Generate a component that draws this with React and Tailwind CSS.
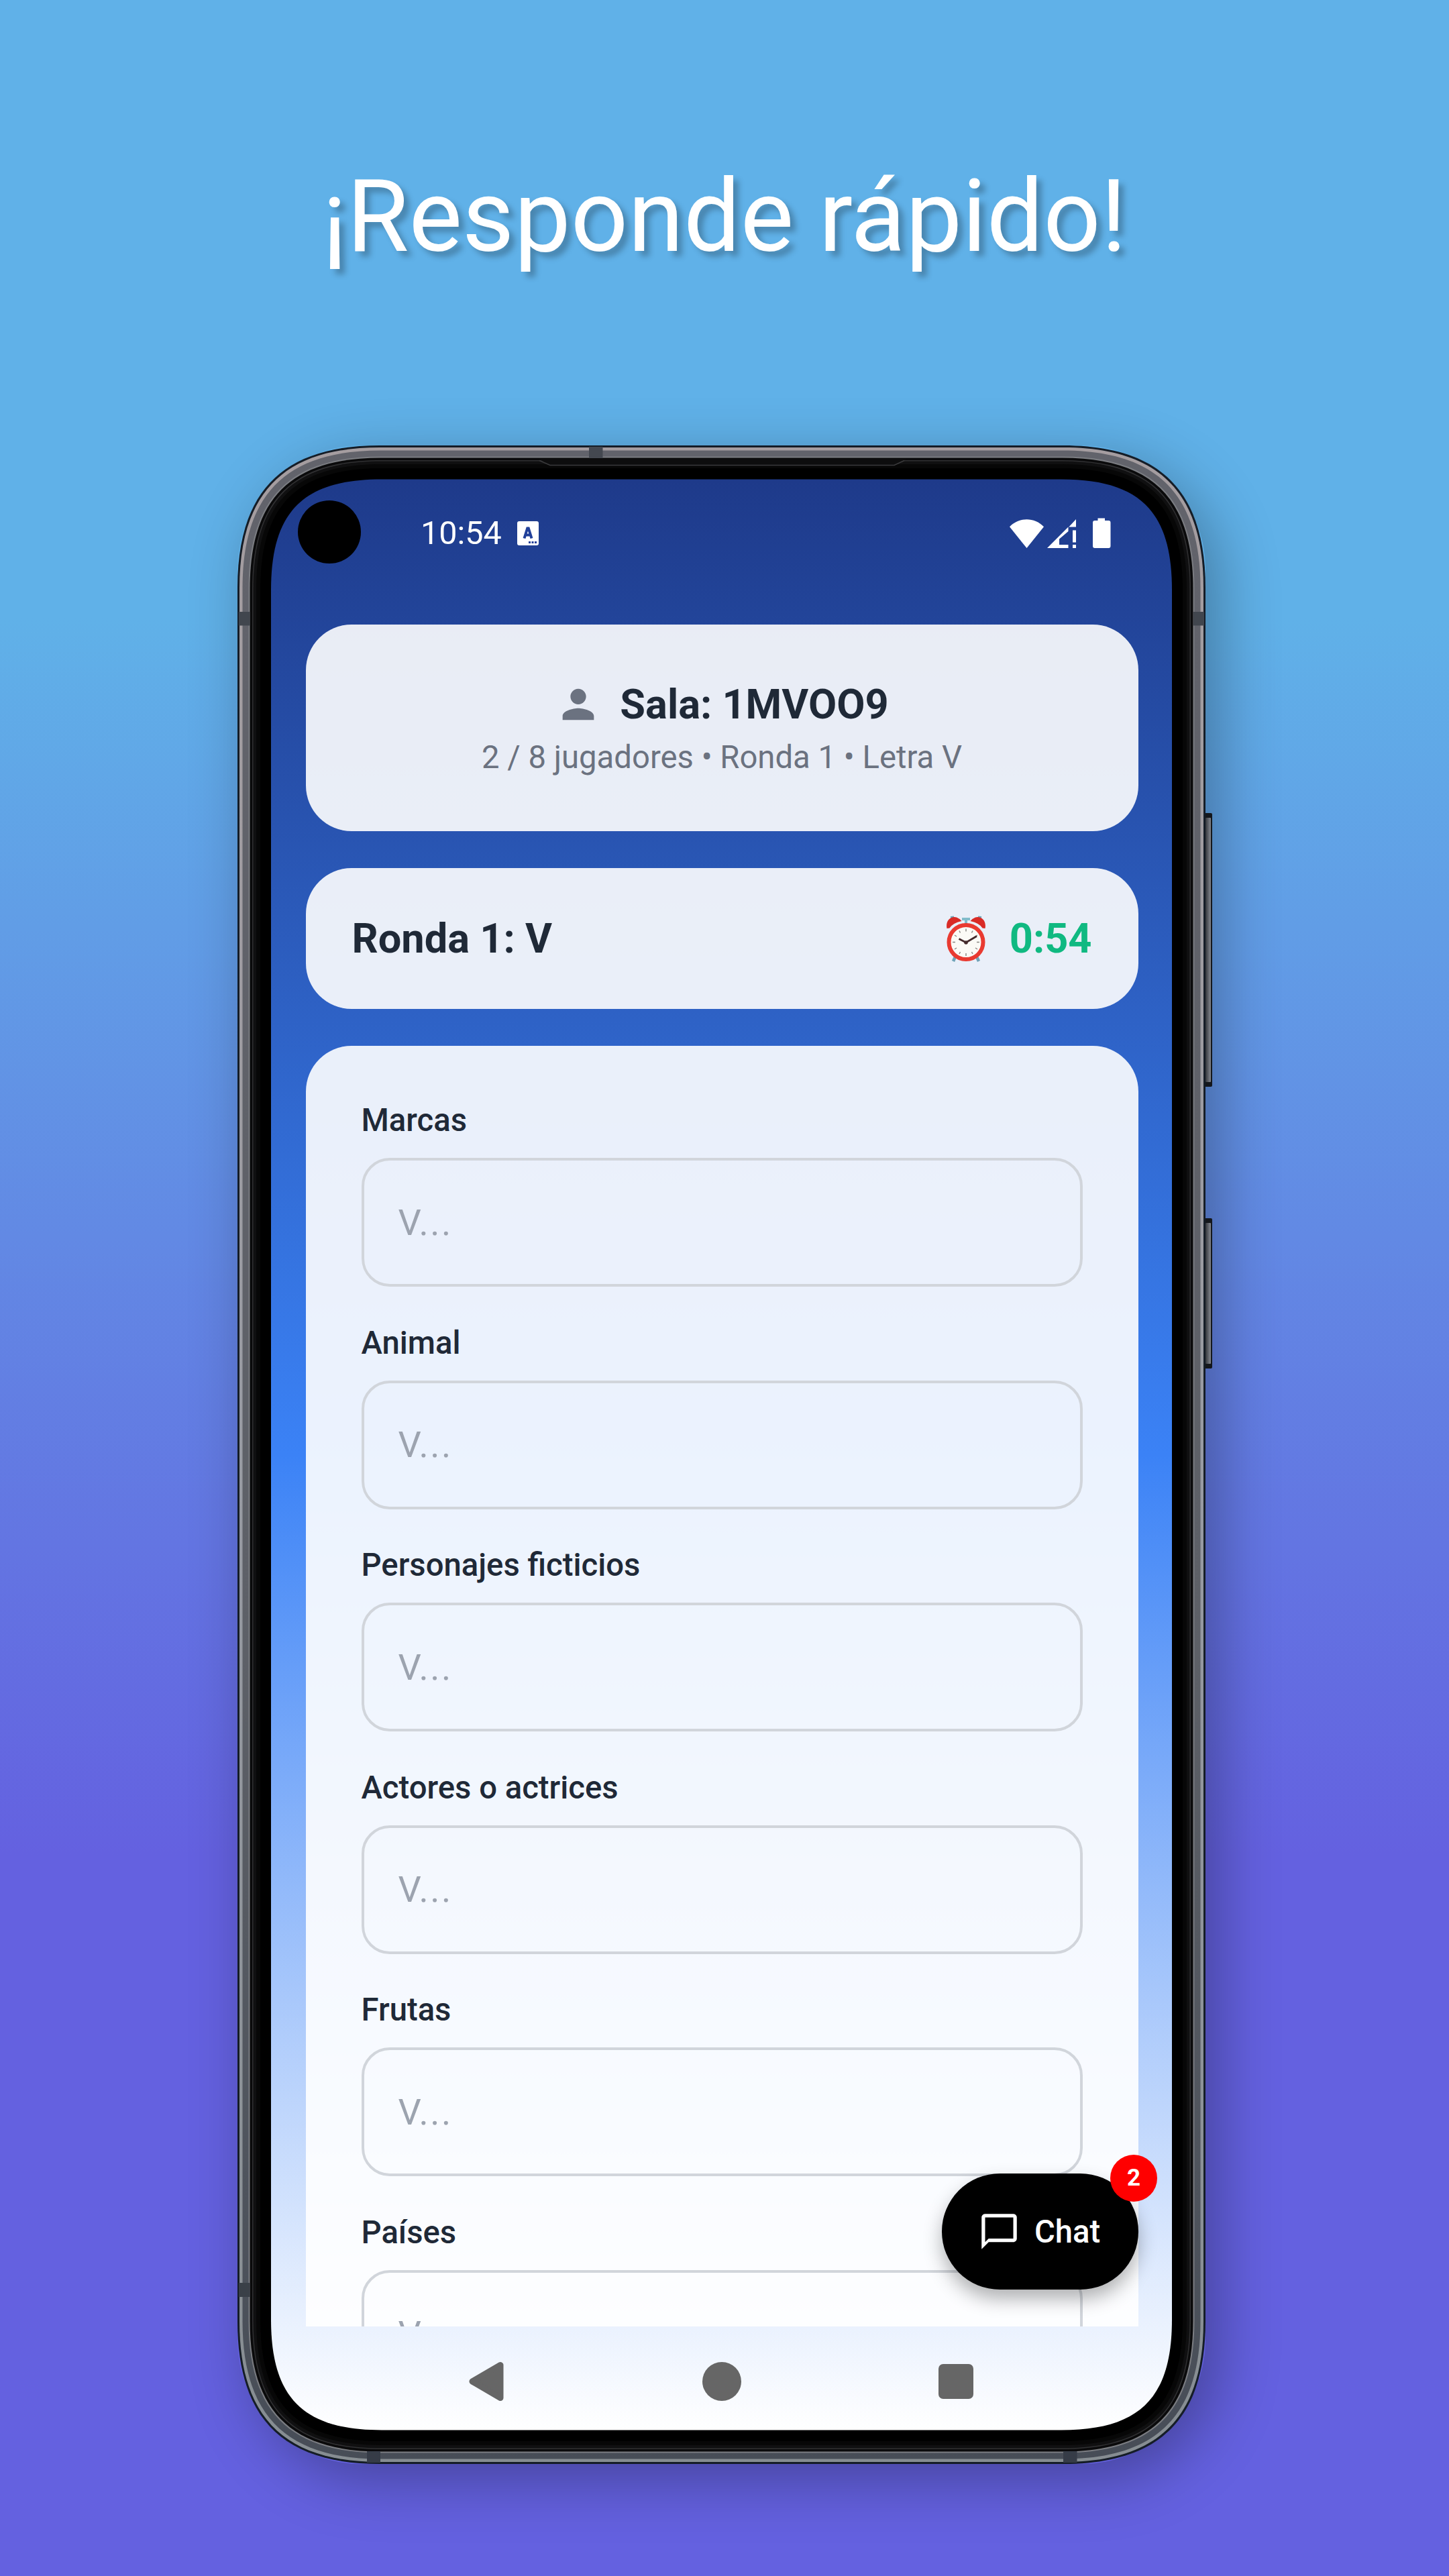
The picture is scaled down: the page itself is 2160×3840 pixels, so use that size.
import React from "react";

const FIELDS = ["Marcas", "Animal", "Personajes ficticios", "Actores o actrices", "Frutas", "Países"];

// Rounded rectangle whose corners span `e` along each edge, with control points at `c`.
function squircle(x, y, w, h, e, c) {
  const r = x + w;
  const b = y + h;
  return `M${x + e} ${y}H${r - e}C${r - c} ${y} ${r} ${y + c} ${r} ${y + e}V${b - e}C${r} ${b - c} ${r - c} ${b} ${r - e} ${b}H${x + e}C${x + c} ${b} ${x} ${b - c} ${x} ${b - e}V${y + e}C${x} ${y + c} ${x + c} ${y} ${x + e} ${y}Z`;
}

function ring(inset) {
  return squircle(inset, inset, 1443 - 2 * inset, 3009 - 2 * inset, 212 - inset * 0.9, 68 - inset * 0.4);
}

const SCREEN = squircle(50, 50.5, 1343, 2908, 165, 48);

function PhoneFrame() {
  return (
    <svg className="pointer-events-none absolute left-0 top-0 h-[3009px] w-[1454px]" viewBox="0 0 1454 3009" fill="none">
      <defs>
        <linearGradient id="metal" x1="0" y1="0" x2="0" y2="1">
          <stop offset="0" stopColor="#62636b" />
          <stop offset="0.6" stopColor="#5d6067" />
          <stop offset="1" stopColor="#474d57" />
        </linearGradient>
        <linearGradient id="shine" x1="0" y1="0" x2="0" y2="1">
          <stop offset="0" stopColor="#a59da0" />
          <stop offset="0.5" stopColor="#989ba3" />
          <stop offset="1" stopColor="#868d92" />
        </linearGradient>
        <linearGradient id="key" x1="0" y1="0" x2="1" y2="0">
          <stop offset="0" stopColor="#33363b" />
          <stop offset="0.5" stopColor="#5d6067" />
          <stop offset="1" stopColor="#85888e" />
        </linearGradient>
        <mask id="hole">
          <rect width="1454" height="3009" fill="#fff" />
          <path d={SCREEN} fill="#000" />
        </mask>
      </defs>
      {[[548, 408], [1152, 224]].map(([y, h]) => (
        <g key={y}>
          <rect x="1440" y={y} width="13" height={h} rx="2" fill="#14171c" />
          <rect x="1443" y={y + 7} width="8" height={h - 14} rx="1" fill="url(#key)" />
        </g>
      ))}
      <g mask="url(#hole)">
        <path d={ring(0)} fill="#151d27" />
        <path d={ring(3)} fill="url(#shine)" />
        <path d={ring(7.5)} fill="url(#metal)" />
        <path d={ring(16.5)} fill="#7b7d82" />
        <path d={ring(18.5)} fill="#0a0a0b" />
        <path d={ring(22)} fill="#303032" />
        <path d={ring(23.5)} fill="#101011" />
        <path d={ring(28)} fill="#070707" />
        <path d={ring(34)} fill="#000" />
        <path d="M448 20H998L980 29H467L452 22Z" fill="#0d0d0e" />
        <path d="M450 22.5L466 29.5H979L994 22.5" stroke="#3a3a3c" strokeWidth="1.6" />
        <rect x="524" y="2" width="20.5" height="17" fill="#444850" />
        <rect x="2" y="248" width="16.5" height="20.5" fill="#41464e" />
        <rect x="1425" y="248" width="16" height="20.5" fill="#41464e" />
        <rect x="2" y="2739" width="16.5" height="21" fill="#3a4048" />
        <rect x="193" y="2990" width="20" height="17" fill="#363c47" />
        <rect x="1231" y="2990" width="20.5" height="17" fill="#363c47" />
      </g>
    </svg>
  );
}

function KeyboardIcon() {
  return (
    <svg className="ml-[23px] h-9 w-8" viewBox="0 0 32 36">
      <rect width="32" height="36" rx="3" fill="#fff" />
      <path d="M10.5 25.500L15.200 10.500H16.800L21.500 25.500M12.500 20.500H19.500" stroke="#21409a" strokeWidth="4" fill="none" />
      <path d="M17 30h3v3h-3zM21.500 30h3v3h-3zM26 30h3v3h-3z" fill="#21409a" />
    </svg>
  );
}

function StatusIcons() {
  return (
    <svg className="h-[46px] w-[152px]" viewBox="0 0 152 46" fill="#fff">
      <path d="M25.500 45L0 13.200C14-1.500 37-1.500 51 13.200Z" />
      <path d="M99 2V13.500H88.300ZM87.500 13.500V20L74 31.500V40H87.500V45H56Z" />
      <path d="M94 18.500h5v18h-5zM94 40h5v5h-5z" />
      <path d="M131.500 0.500H142V4H147.500Q150.500 4 150.500 7V42Q150.500 45 147.500 45H127Q124 45 124 42V7Q124 4 127 4H131.500Z" />
    </svg>
  );
}

function AlarmClock() {
  return (
    <svg className="h-[70px] w-[60px]" viewBox="0 0 60 70" fill="none">
      <path d="M14 61L11 68M46 61L49 68" stroke="#6fa3b8" strokeWidth="4.500" />
      <path d="M24 5H36M30 5V12" stroke="#82bccb" strokeWidth="4" />
      <path d="M7 2.500L12 2M48 2L53 2.500" stroke="#6fa3b8" strokeWidth="3" />
      <path d="M1.500 19C-1 7 8 0 16 2.500Q21 4.500 23.500 8Q10 11 5.500 18.500Z" fill="#d92b26" />
      <path d="M58.500 19C61 7 52 0 44 2.500Q39 4.500 36.500 8Q50 11 54.500 18.500Z" fill="#d92b26" />
      <circle cx="30" cy="39.500" r="25.500" fill="#fbfaf6" stroke="#e93a31" strokeWidth="6" />
      <path d="M30 19.500v4M30 56v4M10 39.500h4M46 39.500h4M20 22.500l1.500 3M40 22.500l-1.500 3M13 29l3 2M47 29l-3 2M13 50l3-2M47 50l-3-2M20 57l1.500-3M40 57l-1.500-3" stroke="#8d8a87" strokeWidth="1.500" />
      <path d="M19.500 34.500L30 40L46 30.500" stroke="#43292b" strokeWidth="2.800" />
      <circle cx="30" cy="40" r="2.800" fill="#43292b" />
    </svg>
  );
}

function Field({ label }) {
  return (
    <div className="shrink-0">
      <div className="h-[60px] text-[47.250px] font-medium leading-[60px] text-[#1f2937]">{label}</div>
      <div className="mt-[26px] flex h-[192px] items-center rounded-[42px] border-[4px] border-[#d1d5db] pl-[51px] text-[54px] tracking-[2.500px] text-[#9ca3af]">
        V...
      </div>
    </div>
  );
}

export default function App() {
  return (
    <div className="relative h-[3840px] w-[2160px] overflow-hidden bg-[linear-gradient(180deg,#60b1e8_0%,#60b1e8_24%,#6461e0_72%,#6461e0_100%)] font-['Roboto',sans-serif]">
      <h1 className="h-[664px] pt-[233px] text-center text-[150px] font-normal leading-[180px] text-white [text-shadow:8px_8px_8px_rgba(0,0,0,0.25)]">
        ¡Responde rápido!
      </h1>
      <div className="relative ml-[354px] h-[3009px] w-[1443px] rounded-[185px] px-[50px] pt-[50px] shadow-[20px_24px_90px_rgba(0,0,0,0.300)]">
        <div className="flex h-[2909px] w-[1343px] flex-col overflow-hidden rounded-[110px] bg-[linear-gradient(180deg,#1e3a8a_0%,#3b82f6_50%,#ffffff_100%)]">
          <div className="flex h-[217px] shrink-0 items-start pl-[40px] pr-[90px] pt-8">
            <div className="size-[94px] rounded-full bg-black" />
            <div className="ml-[89px] flex h-[98px] items-center text-[48.500px] text-white">
              10:54
              <KeyboardIcon />
            </div>
            <div className="ml-auto flex h-[97px] items-center">
              <StatusIcons />
            </div>
          </div>
          <div className="flex h-[2537px] shrink-0 flex-col overflow-hidden pl-[51.500px] pr-[50.500px]">
            <div className="h-[308px] shrink-0 rounded-[68px] bg-white/90 pt-[79px]">
              <div className="flex h-[80px] items-center justify-center">
                <svg className="size-[70px] fill-[#6b7280]" viewBox="0 0 24 24">
                  <path d="M12 12c2.210 0 4-1.790 4-4s-1.790-4-4-4-4 1.790-4 4 1.790 4 4 4zm0 2c-2.670 0-8 1.340-8 4v2h16v-2c0-2.660-5.330-4-8-4z" />
                </svg>
                <span className="ml-[27px] text-[61.300px] font-bold leading-[80px] text-[#1f2937]">Sala: 1MVOO9</span>
              </div>
              <div className="mt-[7px] text-center text-[47.250px] leading-[64px] text-[#6b7280]">2 / 8 jugadores • Ronda 1 • Letra V</div>
            </div>
            <div className="mt-[55px] flex h-[210px] shrink-0 items-center justify-between rounded-[68px] bg-white/90 pl-[69px] pr-[69px] pt-[2px] text-[61.300px] font-bold text-[#1f2937]">
              <span>Ronda 1: V</span>
              <span className="flex items-center text-[#10b981]">
                <AlarmClock />
                <span className="ml-[35px]">0:54</span>
              </span>
            </div>
            <div className="mt-[55px] flex h-[2300px] shrink-0 flex-col gap-[53.600px] rounded-t-[68px] bg-white/90 pl-[83px] pr-[83px] pt-[81px]">
              {FIELDS.map((label) => (
                <Field key={label} label={label} />
              ))}
            </div>
          </div>
          <div className="flex h-[155px] shrink-0 items-center justify-between pl-[295px] pr-[296px] pt-[8px]">
            <svg className="h-[60px] w-[54px]" viewBox="0 0 54 60">
              <path d="M5 30L47 5.500V54.500Z" fill="#666" stroke="#666" strokeWidth="9" strokeLinejoin="round" />
            </svg>
            <div className="size-[58px] rounded-full bg-[#666]" />
            <div className="size-[52px] rounded-[7px] bg-[#666]" />
          </div>
        </div>
        <PhoneFrame />
        <div className="absolute left-[1050px] top-[2576px] flex h-[173px] w-[293px] items-center rounded-full bg-black pl-[54px] text-white shadow-[0_14px_28px_rgba(0,0,0,0.300)]">
          <svg className="size-[63px] fill-white" viewBox="0 0 24 24">
            <path d="M20 2H4c-1.100 0-2 .9-2 2v18l4-4h14c1.100 0 2-.9 2-2V4c0-1.100-.9-2-2-2zm0 14H6l-2 2V4h16v12z" />
          </svg>
          <span className="ml-[21px] pt-[2px] text-[47.250px] font-medium">Chat</span>
          <div className="absolute left-[251px] top-[-28px] flex size-[70px] items-center justify-center rounded-full bg-[#ff0000] text-[35px] font-bold">
            2
          </div>
        </div>
      </div>
    </div>
  );
}
